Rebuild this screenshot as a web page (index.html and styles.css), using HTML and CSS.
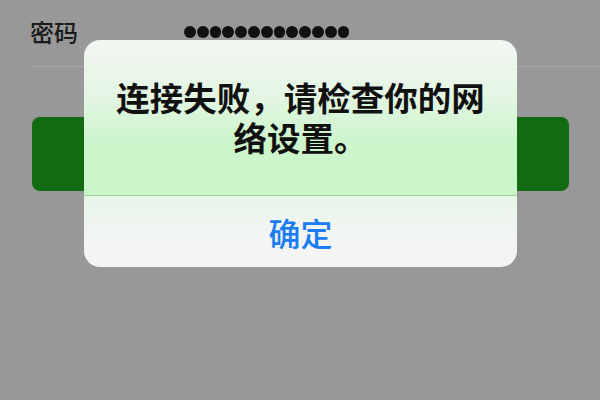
FILE: index.html
```html
<!DOCTYPE html>
<html lang="zh-CN">

<head>
    <meta charset="UTF-8">
    <meta name="viewport" content="width=device-width, initial-scale=1.0">
    <title>登录</title>
    <link rel="stylesheet" href="styles.css">
</head>

<body>
    <div class="screen">
        <div class="form-row">
            <span class="label">密码</span>
            <span class="password">
                <span class="dot"></span><span class="dot"></span><span class="dot"></span><span class="dot"></span>
                <span class="dot"></span><span class="dot"></span><span class="dot"></span><span class="dot"></span>
                <span class="dot"></span><span class="dot"></span><span class="dot"></span><span class="dot"></span>
                <span class="dot"></span>
            </span>
        </div>
        <div class="row-line"></div>
        <div class="login-btn"></div>

        <!-- alert over the login form -->
        <div class="alert">
            <div class="alert-body">连接失败，请检查你的网络设置。</div>
            <div class="alert-action">确定</div>
        </div>
    </div>
</body>

</html>
```

FILE: styles.css
```css
* {
    box-sizing: border-box;
}

body {
    margin: 0;
    font-family: "Noto Sans CJK SC", "Noto Sans", sans-serif;
    background-color: #989898;
}

.screen {
    position: relative;
    width: 600px;
    height: 400px;
    overflow: hidden;
    background-color: #989898;
}

.form-row {
    display: flex;
    align-items: center;
    height: 66px;
    padding-left: 30px;
    padding-bottom: 4px;
}

.label {
    width: 154px;
    font-size: 24px;
    font-weight: 500;
    color: #1a1a1a;
}

.password {
    display: flex;
    gap: 1px;
    margin-top: 2px;
}

.dot {
    width: 11.8px;
    height: 11.8px;
    border-radius: 50%;
    background-color: #111;
}

.row-line {
    height: 1px;
    margin-left: 32px;
    background-color: #a9a9a9;
}

.login-btn {
    height: 74px;
    margin: 50px 31px 0 32px;
    border-radius: 8px;
    background-color: #126b12;
}

.alert {
    position: absolute;
    left: 84px;
    top: 40px;
    width: 433px;
    height: 227px;
    display: flex;
    flex-direction: column;
    border-radius: 16px;
    overflow: hidden;
}

.alert-body {
    height: 156px;
    padding: 37px 28px 0;
    font-size: 33.5px;
    font-weight: 700;
    line-height: 40px;
    text-align: center;
    color: #111;
    background: linear-gradient(to bottom, #f3f6f3 0%, #e4f6e3 35%, #cdf5cc 65%, #c9f5c9 100%);
    border-bottom: 1px solid #96d896;
}

.alert-action {
    flex: 1;
    display: flex;
    align-items: center;
    justify-content: center;
    font-size: 32px;
    font-weight: 500;
    color: #1b7cf3;
    background: linear-gradient(to bottom, #e8f5e8 0%, #f1f5f2 50%, #f4f5f6 100%);
}
```
